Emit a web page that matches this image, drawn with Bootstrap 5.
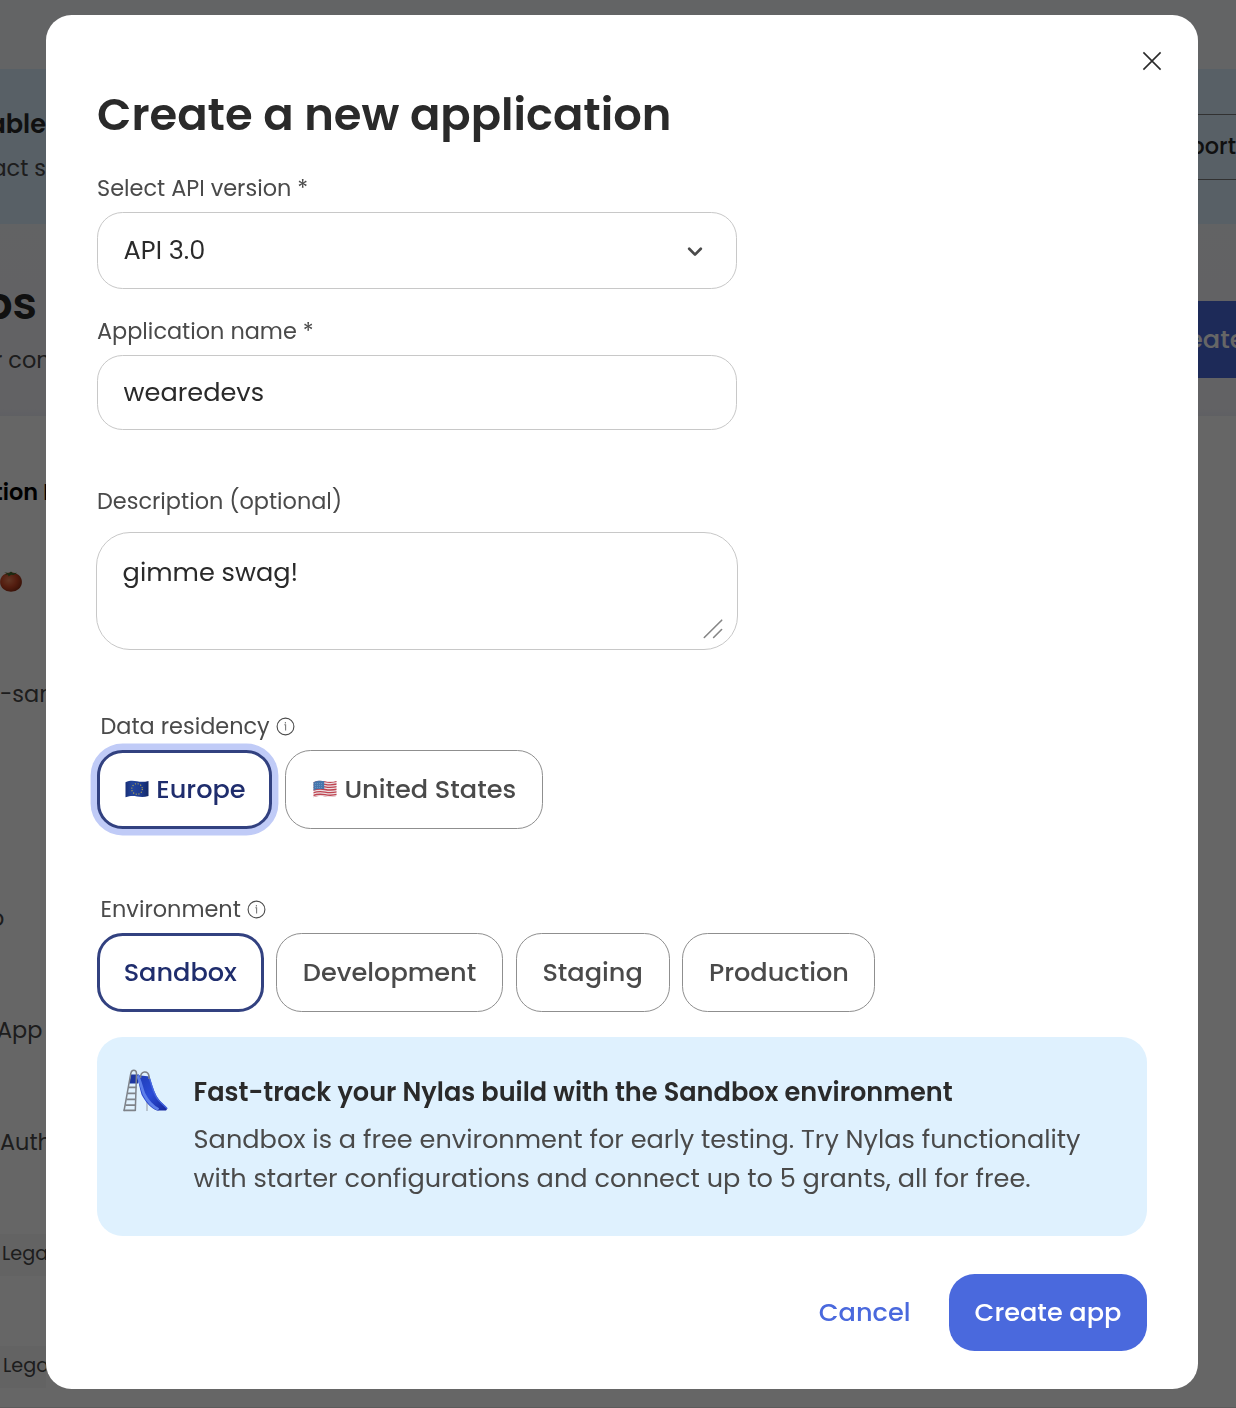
<!DOCTYPE html>
<html lang="en">
<head>
<meta charset="utf-8">
<meta name="viewport" content="width=device-width, initial-scale=1">
<title>Create a new application</title>
<link href="https://cdn.jsdelivr.net/npm/bootstrap@5.3.0/dist/css/bootstrap.min.css" rel="stylesheet">
<style>
  body { font-family: Poppins, Inter, sans-serif; font-size: 25.6px; color: #2a2a2a; background: #fff; height: 1408px; overflow: hidden; }
  /* dashboard behind the dialog */
  .dash { height: 1408px; line-height: 1; white-space: nowrap; }
  .dash-top { height: 69px; background: #f8f9fd; }
  .dash-banner { height: 155px; background: #dceffe; }
  .dash-head { height: 192px; background: linear-gradient(#f6f7fb, #f4f4fb 185px, #eeeff8 192px); }
  .edge { width: 46px; overflow: hidden; }
  .edge-text { line-height: 40px; height: 40px; }
  .edge-right { width: 38px; overflow: hidden; }
  .edge-banner { padding-top: 35px; }
  .edge-title { font-size: 44.8px; line-height: 60px; margin-top: 50px; padding-right: 9px; }
  .edge-sub { margin: 6px 0 0 -6px; }
  .soft { color: #4a4a4a; }
  .fs-cell { font-size: 22.4px; }
  .support-slot { padding-top: 45px; }
  .support-btn { height: 66px; border-top: 1px solid #7c7c7c; border-bottom: 1px solid #7c7c7c; padding-bottom: 1px; }
  .create-slot { padding-top: 77px; }
  .create-btn { height: 77px; background: #4a69dd; color: #fff; }
  .create-btn span { margin-left: -11px; }
  .tag-chip { background: #f7f7f7; height: 42px; line-height: 40px; font-size: 19.2px; padding-left: 2px; }
  .shade { --bs-backdrop-opacity: .6; }
  /* dialog */
  .app-dialog { max-width: 1152px; width: 1152px; margin: 15px 38px 0 46px; }
  .app-content { height: 1374px; border: 0; border-radius: 25.6px; padding: 72px 51px 38px; color: #2a2a2a; }
  .close-x { position: absolute; top: 36px; right: 36px; width: 20px; height: 20px; line-height: 0; }
  .app-title { font-size: 44.8px; font-weight: 600; line-height: 56px; height: 56px; margin: 0; }
  .field-label { font-size: 22.4px; line-height: 28px; height: 28px; color: #4a4a4a; margin: 0; }
  .fields { width: 640px; }
  .field { font-size: 25.6px; color: #2a2a2a; border: 1px solid #c8c8c8; border-radius: 25.6px; padding: 0 25.6px; background: #fff; }
  .field-select { height: 77px; }
  .field-input { height: 75px; }
  .field-area { width: 642px; height: 118px; margin-left: -1px; border-radius: 34px; padding-top: 20px; line-height: 38.4px; resize: none; overflow: hidden; }
  .area-grip { position: absolute; right: 14px; bottom: 11px; }
  .pick { --bs-btn-color: #4a4a4a; --bs-btn-border-color: #8f8f8f; --bs-btn-bg: #fff; --bs-btn-border-radius: 25.6px; --bs-btn-font-size: 25.6px; --bs-btn-font-weight: 500; height: 79px; padding: 0; white-space: nowrap; }
  .pick-on { --bs-btn-color: #1f2d6d; border: 3px solid #324180; }
  .pick-focus { box-shadow: 0 0 0 6.4px #c0cbf7; }
  .flag { margin: -2px 7px 0 2px; }
  .gap-pick { gap: 12.8px; }
  .w-eu { width: 175px; } .w-us { width: 258px; }
  .w-sb { width: 166.5px; } .w-dev { width: 226.5px; } .w-stg { width: 154px; } .w-prod { width: 193px; }
  .note { height: 199px; background: #dff1fe; border: 0; border-radius: 25.6px; padding: 0 25.6px; margin: 25px 0 38px; }
  .note-title { font-weight: 600; line-height: 38.4px; margin-top: 36px; }
  .note-text { color: #4a4a4a; line-height: 39px; margin: 9px 0 0; white-space: nowrap; }
  .note-icon { margin: 32px 26px 0 0; flex: none; }
  .act { --bs-btn-font-size: 25.6px; --bs-btn-font-weight: 500; --bs-btn-border-radius: 25.6px; height: 77px; border: 0; white-space: nowrap; }
  .act-cancel { --bs-btn-color: #4a69dd; padding: 0; width: 92px; margin-right: 38.4px; }
  .act-create { --bs-btn-color: #fff; --bs-btn-bg: #4a69dd; width: 198px; padding: 0; }
</style>
<script src="https://cdn.jsdelivr.net/npm/bootstrap@5.3.0/dist/js/bootstrap.bundle.min.js" defer></script>
</head>
<body>
<div class="dash d-flex flex-column" aria-hidden="true">
  <div class="dash-top"></div>
  <div class="dash-banner d-flex justify-content-between">
    <div class="edge edge-banner d-flex flex-column align-items-end">
      <div class="edge-text fw-semibold">able</div>
      <div class="edge-text soft fs-cell mt-1">act s</div>
    </div>
    <div class="edge-right support-slot">
      <div class="support-btn d-flex align-items-center justify-content-end fw-medium fs-cell">port</div>
    </div>
  </div>
  <div class="dash-head d-flex justify-content-between">
    <div class="edge">
      <div class="edge-title fw-semibold d-flex justify-content-end">ps</div>
      <div class="edge-text edge-sub soft fs-cell">r con</div>
    </div>
    <div class="edge-right create-slot">
      <div class="create-btn d-flex align-items-center fw-medium"><span>eate</span></div>
    </div>
  </div>
  <div class="edge fs-cell soft">
    <div class="edge-text fw-semibold text-black" style="margin:56px 0 0 -6px">tion ID</div>
    <svg class="d-block" style="margin-top:59px" width="22" height="21" viewBox="0 0 22 21">
      <defs><radialGradient id="tom" cx=".4" cy=".4" r=".65"><stop offset="0" stop-color="#f4875c"/><stop offset=".55" stop-color="#d24a28"/><stop offset="1" stop-color="#8c2c13"/></radialGradient></defs>
      <ellipse cx="11" cy="11" rx="10.9" ry="9.8" fill="url(#tom)"/>
      <path d="M4 1l5 1.300L11 .5l2 1.800 4-.6-3.300 2.300L11 3.700 8.600 5.500 8 3.500l-3 .2L7 2.500z" fill="#3f6c2c"/>
    </svg>
    <div class="edge-text" style="margin-top:82px">-sandbox</div>
    <div class="edge-text" style="margin:184px 0 0 -10px">o</div>
    <div class="edge-text" style="margin:72px 0 0 -3px">App</div>
    <div class="edge-text" style="margin-top:72px">Auth</div>
    <div class="tag-chip" style="margin-top:72px">Legacy</div>
    <div class="tag-chip" style="margin-top:70px;padding-left:3px">Legacy</div>
  </div>
  <div class="mt-auto" style="height:1px;background:#e4e4e4"></div>
</div>

<div class="modal-backdrop show shade"></div>
<div class="modal show d-block overflow-hidden" role="dialog" aria-modal="true" aria-labelledby="dialogTitle">
  <div class="modal-dialog app-dialog">
    <div class="modal-content app-content">
      <button type="button" class="btn p-0 border-0 close-x" aria-label="Close">
        <svg width="20" height="20" viewBox="0 0 20 20" fill="none" stroke="#2a2a2a" stroke-width="1.6"><path d="M1.400 1.400l17.200 17.200M18.600 1.400L1.400 18.600"/></svg>
      </button>
      <h1 class="app-title" id="dialogTitle">Create a new application</h1>

      <form class="fields">
        <div class="field-label" style="margin-top:31px">Select API version *</div>
        <div class="field field-select d-flex align-items-center justify-content-between" role="combobox" style="margin-top:10px">
          <span>API 3.0</span>
          <svg style="margin:1px 7px 0 0" width="16" height="11" viewBox="0 0 16 11" fill="none" stroke="#4a4a4a" stroke-width="2.700" stroke-linecap="round" stroke-linejoin="round"><path d="M2.200 2.800L8 8.600l5.800-5.800"/></svg>
        </div>
        <label class="field-label d-block" for="appName" style="margin-top:28px">Application name *</label>
        <input id="appName" class="form-control field field-input" value="wearedevs" style="margin-top:10px">
        <label class="field-label d-block" for="appDesc" style="margin-top:57px">Description (optional)</label>
        <div class="position-relative" style="margin-top:17px">
          <textarea id="appDesc" class="form-control field field-area">gimme swag!</textarea>
          <svg class="area-grip" width="20" height="20" viewBox="0 0 20 20" stroke="#858585" stroke-width="1.600" stroke-linecap="round"><path d="M1.300 18.500L18.700 1.200M10.600 18.500l8-8"/></svg>
        </div>
      </form>

      <div class="field-label d-flex align-items-center" style="margin:62px 0 10px 3.500px">Data residency
        <svg style="margin-left:6px" width="19" height="19" viewBox="0 0 19 19" fill="none" stroke="#4a4a4a" stroke-width="1.100"><circle cx="9.500" cy="9.500" r="8.400"/><path d="M8.300 7.800h1.300v5.600M9.400 5v1.400" stroke="#7a7a7a"/></svg>
      </div>
      <div class="d-flex gap-pick">
        <button type="button" class="btn pick pick-on pick-focus w-eu d-flex align-items-center justify-content-center">
          <svg class="flag" width="24" height="18" viewBox="0 0 24 18"><defs><linearGradient id="eu"><stop offset="0" stop-color="#182f78"/><stop offset=".3" stop-color="#23459c"/><stop offset=".65" stop-color="#1d3b90"/><stop offset="1" stop-color="#142967"/></linearGradient></defs><path d="M.5 2.200C5 .2 8.500 .6 12 1.300s7 .9 11.500-.3v15c-4.500 1.300-8 1-11.500.4S5 15.600.5 17.300z" fill="url(#eu)"/><circle cx="12" cy="9" r="5.300" fill="none" stroke="#b9a94b" stroke-width="1.100" stroke-dasharray="1.100 1.675"/></svg>Europe</button>
        <button type="button" class="btn pick w-us d-flex align-items-center justify-content-center">
          <svg class="flag" width="24" height="18" viewBox="0 0 24 18"><defs><clipPath id="wave"><path d="M.5 2.200C5 .2 8.500 .6 12 1.300s7 .9 11.500-.3v15c-4.500 1.300-8 1-11.500.4S5 15.600.5 17.300z"/></clipPath></defs><g clip-path="url(#wave)"><path fill="#ecdfe2" d="M0 0h24v18H0z"/><path d="M0 2.500C5 .6 8.500 1 12 1.700s7 .9 12-.3M0 5.100c5-1.900 8.500-1.500 12-.8s7 .9 12-.3M0 7.700c5-1.900 8.500-1.500 12-.8s7 .9 12-.3M0 10.300c5-1.900 8.500-1.500 12-.8s7 .9 12-.3M0 12.900c5-1.900 8.500-1.500 12-.8s7 .9 12-.3M0 15.500c5-1.900 8.500-1.500 12-.8s7 .9 12-.3M0 18c5-1.900 8.500-1.500 12-.8s7 .9 12-.3" fill="none" stroke="#bf4350" stroke-width="1.350"/><path d="M0 0h11.200v9.300C8 8.700 4 8.800 0 10.500z" fill="#4777ad"/><path d="M2 3.500h8M2 5.500h8M2 7.500h8" stroke="#7ea3cb" stroke-width=".6" stroke-dasharray="1 1"/></g></svg>United States</button>
      </div>

      <div class="field-label d-flex align-items-center" style="margin:66px 0 10px 3.500px">Environment
        <svg style="margin-left:6px" width="19" height="19" viewBox="0 0 19 19" fill="none" stroke="#4a4a4a" stroke-width="1.100"><circle cx="9.500" cy="9.500" r="8.400"/><path d="M8.300 7.800h1.300v5.600M9.400 5v1.400" stroke="#7a7a7a"/></svg>
      </div>
      <div class="d-flex gap-pick">
        <button type="button" class="btn pick pick-on w-sb">Sandbox</button>
        <button type="button" class="btn pick w-dev">Development</button>
        <button type="button" class="btn pick w-stg">Staging</button>
        <button type="button" class="btn pick w-prod">Production</button>
      </div>

      <div class="alert note d-flex align-items-start" role="note">
        <svg class="note-icon" width="45" height="44" viewBox="0 0 45 44" fill="none">
          <defs><linearGradient id="sl" x1="0" y1="0" x2="1" y2="1"><stop offset="0" stop-color="#203cb4"/><stop offset=".5" stop-color="#2a4bd6"/><stop offset="1" stop-color="#17279a"/></linearGradient></defs>
          <path d="M24 28v14M35 36v6" stroke="#a9b2bd" stroke-width="1.400"/>
          <path d="M8 5.500h8l-1 9H6.300z" fill="#1d36a0"/>
          <path d="M13.500 6L26.500 7.500c2 6 3.500 13 7 19.500 2.500 4.500 6 7 11 12.500l-1.500 2h-9C27.500 39 22 32.500 18.500 25.500 16.500 19 15.500 12 13.500 6z" fill="url(#sl)"/>
          <path d="M14.500 6.500c3 6 4 12 6.500 18.500 4 8 8 12.500 14.500 15.500" stroke="#5f80ea" stroke-width="2.800"/>
          <path d="M26 8c2 6 3.500 13 7 19.500 2 4 6 7 11 12" stroke="#4566de" stroke-width="1.400"/>
          <path d="M1 42L7.800 4.500Q8.300 1.300 10.800 1.300T13.500 4.300L12.300 42M17.500 9q0-5.500 3.800-6T26 7v3" stroke="#7d8289" stroke-width="1.500"/>
          <path d="M5.500 18.300h8M4.500 24.300h8.500M3.500 30.300h9M2.500 36.200h10M.5 41.300h12" stroke="#7f8389" stroke-width="1.700"/>
        </svg>
        <div>
          <div class="note-title">Fast-track your Nylas build with the Sandbox environment</div>
          <p class="note-text">Sandbox is a free environment for early testing. Try Nylas functionality<br>with starter configurations and connect up to 5 grants, all for free.</p>
        </div>
      </div>

      <div class="d-flex justify-content-end align-items-center">
        <button type="button" class="btn act act-cancel">Cancel</button>
        <button type="button" class="btn act act-create">Create app</button>
      </div>
    </div>
  </div>
</div>
</body>
</html>
